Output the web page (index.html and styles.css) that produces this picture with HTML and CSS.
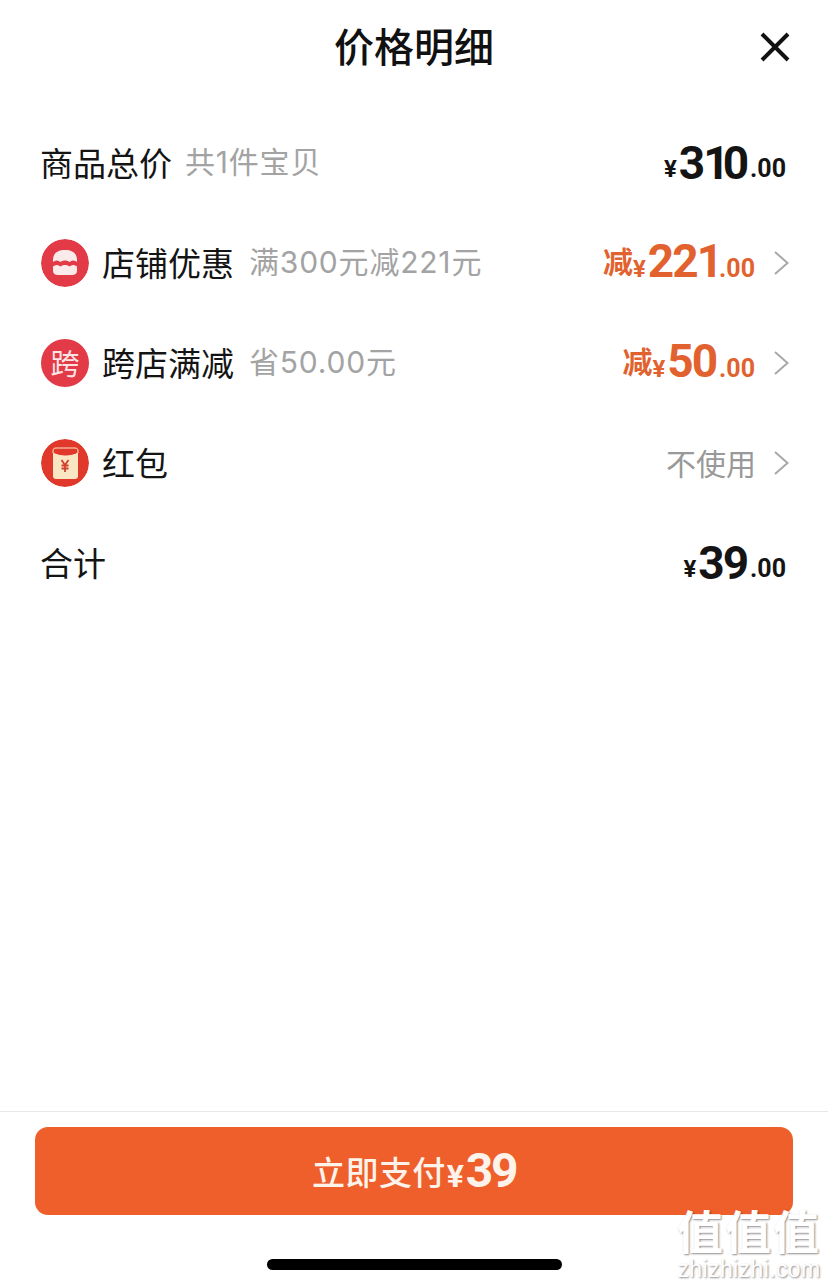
FILE: index.html
```html
<!DOCTYPE html>
<html lang="zh-CN">
<head>
<meta charset="utf-8">
<title>价格明细</title>
<link rel="stylesheet" href="styles.css">
</head>
<body>
<div class="sheet">
  <header class="header">
    <h1 class="title">价格明细</h1>
    <svg class="close" viewBox="0 0 30 30" width="30" height="30"><path d="M2 2 L28 28 M28 2 L2 28" stroke="#111" stroke-width="4" fill="none"/></svg>
  </header>
  <main class="rows">
    <div class="row">
      <span class="label">商品总价</span><span class="sub sub-first">共1件宝贝</span>
      <span class="price price-plain"><span class="yen">¥</span><span class="big">3<span class="one">1</span>0</span><span class="small">.00</span></span>
    </div>
    <div class="row">
      <svg class="badge" viewBox="0 0 48 48" width="48" height="48">
        <circle cx="24" cy="24" r="24" fill="#e23a46"/>
        <path d="M12 21 C12 14 17 11 24 11 C31 11 36 14 36 21 L36 23 C33 21 31 21 28.500 23 C26 21 22 21 19.500 23 C17 21 15 21 12 23 Z" fill="#fbeaea"/>
        <path d="M12 27.500 C15 25.500 17 25.500 19.500 27.500 C22 25.500 26 25.500 28.500 27.500 C31 25.500 33 25.500 36 27.500 L36 32 C36 34.500 34 36 31 36 L17 36 C14 36 12 34.500 12 32 Z" fill="#fbeaea"/>
      </svg>
      <span class="label">店铺优惠</span><span class="sub">满300元减221元</span>
      <span class="price price-off"><span class="off">减</span><span class="yen">¥</span><span class="big">22<span class="one">1</span></span><span class="small">.00</span></span>
      <svg class="chevron" viewBox="0 0 16 26" width="16" height="26"><path d="M2 2 L14.500 13 L2 24" stroke="#a8a8a8" stroke-width="2" fill="none"/></svg>
    </div>
    <div class="row">
      <span class="badge badge-text">跨</span>
      <span class="label">跨店满减</span><span class="sub">省50.00元</span>
      <span class="price price-off"><span class="off">减</span><span class="yen">¥</span><span class="big">50</span><span class="small">.00</span></span>
      <svg class="chevron" viewBox="0 0 16 26" width="16" height="26"><path d="M2 2 L14.500 13 L2 24" stroke="#a8a8a8" stroke-width="2" fill="none"/></svg>
    </div>
    <div class="row">
      <svg class="badge" viewBox="0 0 48 48" width="48" height="48">
        <circle cx="24" cy="24" r="24" fill="#e0392c"/>
        <rect x="12" y="9" width="25" height="31" rx="3" fill="#fbe6c4"/>
        <path d="M12 12 C12 10 13 9 15 9 L34 9 C36 9 37 10 37 12 L37 14 C30 18 19 18 12 14 Z" fill="#e0392c" stroke="#fbe6c4" stroke-width="1"/>
        <path d="M20.500 21 L24 26 L27.500 21 M20.500 26.500 H27.500 M20.500 29.500 H27.500 M24 26 V33" stroke="#d2402c" stroke-width="1.800" fill="none"/>
      </svg>
      <span class="label">红包</span>
      <span class="unused">不使用</span>
      <svg class="chevron" viewBox="0 0 16 26" width="16" height="26"><path d="M2 2 L14.500 13 L2 24" stroke="#a8a8a8" stroke-width="2" fill="none"/></svg>
    </div>
    <div class="row">
      <span class="label">合计</span>
      <span class="price price-plain"><span class="yen">¥</span><span class="big">39</span><span class="small">.00</span></span>
    </div>
  </main>
  <footer class="footer">
    <button class="pay"><span class="pay-text">立即支付</span><span class="pay-amount"><span class="pay-yen">¥</span><span class="pay-num">39</span></span></button>
    <div class="home-wrap"><div class="home"></div></div>
  </footer>
</div>
<div class="watermark">
  <div class="wm-cn">值值值</div>
  <div class="wm-en">zhizhizhi.com</div>
</div>
</body>
</html>
```
FILE: styles.css
```css
* { box-sizing: border-box; }
html, body { margin: 0; padding: 0; }
body {
  width: 828px;
  height: 1287px;
  overflow: hidden;
  background: #fff;
  position: relative;
  color: #141414;
  font-family: "Noto Sans CJK SC", "Noto Sans", sans-serif;
}
.sheet { display: flex; flex-direction: column; height: 1287px; }
.header {
  height: 96px;
  padding-bottom: 6px;
  display: flex;
  align-items: center;
  justify-content: center;
  position: relative;
}
.title { margin: 0; font-size: 40px; font-weight: 500; line-height: 1; color: #111; }
.close { position: absolute; right: 38px; top: 32px; }
.rows { flex: 1; padding: 17px 38px 0 40px; }
.row { height: 100px; display: flex; align-items: center; }
.label { font-size: 33px; line-height: 1; font-weight: 400; padding-bottom: 2px; }
.sub {
  font-family: Inter, "Noto Sans CJK SC", sans-serif;
  font-size: 30px;
  letter-spacing: .8px;
  line-height: 1;
  color: #a3a3a3;
  margin-left: 15px;
  padding-bottom: 2px;
}
.sub-first { margin-left: 13px; padding-bottom: 2px; }
.badge { width: 48px; height: 48px; border-radius: 50%; flex: none; margin: 0 13px 0 1px; }
.badge-text {
  background: #e23a46;
  color: #fbe3e6;
  font-size: 29px;
  line-height: 46px;
  text-align: center;
}
.price {
  margin-left: auto;
  margin-right: 4px;
  padding-bottom: 4px;
  display: flex;
  align-items: baseline;
  font-family: Roboto, "Liberation Sans", sans-serif;
  color: #141414;
}
.price-off { color: #e2622f; margin-right: 18px; }
.price-plain .big { transform: translateY(2px); }
.off { font-family: "Noto Sans CJK SC", sans-serif; font-size: 30px; font-weight: 700; line-height: 1; align-self: center; padding-bottom: 2px; }
.yen { font-size: 24px; font-weight: 700; margin-right: 2px; line-height: 1; }
.big { font-size: 46px; font-weight: 700; line-height: 1; letter-spacing: -2px; }
.one { letter-spacing: -7px; }
.small { font-size: 25px; font-weight: 700; margin-left: 3px; line-height: 1; }
.unused { margin-left: auto; margin-right: 17px; font-size: 30px; line-height: 1; padding-bottom: 2px; color: #999; }
.chevron { flex: none; margin-right: 1px; }
.footer { flex: none; border-top: 1px solid #e8e8e8; padding: 15px 35px 0 35px; height: 176px; }
.pay {
  width: 100%;
  height: 88px;
  border: 0;
  border-radius: 13px;
  background: #ef5f2c;
  color: #fdf3ea;
  display: flex;
  align-items: center;
  justify-content: center;
  padding: 0;
  font-family: "Noto Sans CJK SC", sans-serif;
}
.pay-text { font-size: 33px; font-weight: 500; line-height: 1; letter-spacing: .4px; }
.pay-amount { display: flex; align-items: baseline; font-family: Roboto, sans-serif; font-weight: 700; margin-left: 1px; }
.pay-yen { font-size: 32px; line-height: 1; margin-right: 2px; }
.pay-num { font-size: 48px; line-height: 1; letter-spacing: -2.5px; }
.home-wrap { display: flex; justify-content: center; padding-top: 44px; }
.home { width: 295px; height: 11px; border-radius: 6px; background: #000; }
.watermark {
  position: absolute;
  left: 676px;
  top: 1206px;
  width: 146px;
  text-align: center;
  color: #fff;
  text-shadow: 1px 1px 2px rgba(0,0,0,.45);
  pointer-events: none;
}
.wm-cn { font-size: 46px; height: 52px; line-height: 46px; font-weight: 700; letter-spacing: 2px; white-space: nowrap; }
.wm-en { font-family: "Liberation Sans", sans-serif; font-size: 23px; line-height: 22px; letter-spacing: .4px; white-space: nowrap; }
```
